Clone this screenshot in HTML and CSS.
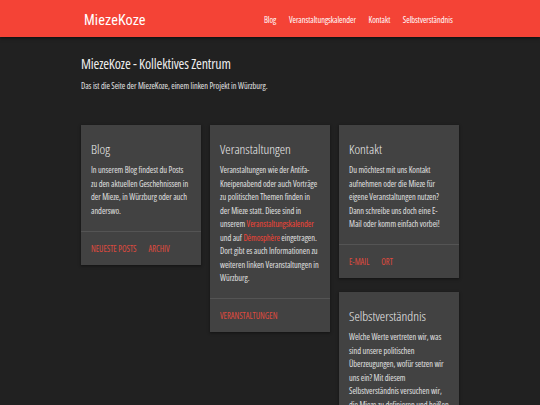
FILE: index.html
```html
<!DOCTYPE html>
<html lang="de">
<head>
<meta charset="utf-8">
<title>MiezeKoze</title>
<link rel="stylesheet" href="styles.css">
</head>
<body>
<nav class="topnav">
  <div class="container nav-inner">
    <a class="brand" href="#">MiezeKoze</a>
    <ul class="nav-links">
      <li><a href="#">Blog</a></li>
      <li><a href="#">Veranstaltungskalender</a></li>
      <li><a href="#">Kontakt</a></li>
      <li><a href="#">Selbstverständnis</a></li>
    </ul>
  </div>
</nav>
<main class="container">
  <h1 class="page-title">MiezeKoze - Kollektives Zentrum</h1>
  <p class="intro">Das ist die Seite der MiezeKoze, einem linken Projekt in Würzburg.</p>
  <div class="cards">
    <div class="col">
      <section class="card">
        <div class="card-content">
          <h2 class="card-title">Blog</h2>
          <p>In unserem Blog findest du Posts zu den aktuellen Geschehnissen in der Mieze, in Würzburg oder auch anderswo.</p>
        </div>
        <div class="card-action"><a href="#">Neueste Posts</a><a href="#">Archiv</a></div>
      </section>
    </div>
    <div class="col">
      <section class="card">
        <div class="card-content">
          <h2 class="card-title">Veranstaltungen</h2>
          <p>Veranstaltungen wie der Antifa-Kneipenabend oder auch Vorträge zu politischen Themen finden in der Mieze statt. Diese sind in unserem <a class="inline" href="#">Veranstaltungskalender</a> und auf <a class="inline" href="#">Démosphère</a> eingetragen. Dort gibt es auch Informationen zu weiteren linken Veranstaltungen in Würzburg.</p>
        </div>
        <div class="card-action"><a href="#">Veranstaltungen</a></div>
      </section>
    </div>
    <div class="col">
      <section class="card">
        <div class="card-content">
          <h2 class="card-title">Kontakt</h2>
          <p>Du möchtest mit uns Kontakt aufnehmen oder die Mieze für eigene Veranstaltungen nutzen? Dann schreibe uns doch eine E-Mail oder komm einfach vorbei!</p>
        </div>
        <div class="card-action"><a href="#">E-Mail</a><a href="#">Ort</a></div>
      </section>
      <section class="card">
        <div class="card-content">
          <h2 class="card-title">Selbstverständnis</h2>
          <p>Welche Werte vertreten wir, was sind unsere politischen Überzeugungen, wofür setzen wir uns ein? Mit diesem Selbstverständnis versuchen wir, die Mieze zu definieren und heißen alle willkommen, die diese Werte mit uns teilen.</p>
        </div>
        <div class="card-action"><a href="#">Selbstverständnis</a></div>
      </section>
    </div>
  </div>
</main>
</body>
</html>
```
FILE: styles.css
```css
html, body {
  margin: 0;
  padding: 0;
}
body {
  background: #212121;
  color: #e4e4e4;
  font-family: "Open Sans", "Roboto Condensed", Roboto, sans-serif;
  font-stretch: 75%;
  font-weight: 380;
  overflow: hidden;
}
a { text-decoration: none; }
.container {
  width: 70%;
  margin: 0 auto;
}

/* nav */
.topnav {
  background: #f44336;
  height: 37px;
  box-shadow: 0 1px 2px rgba(0,0,0,0.35), 0 2px 4px rgba(0,0,0,0.2);
  position: relative;
  z-index: 1;
}
.nav-inner {
  display: flex;
  align-items: center;
  justify-content: space-between;
  height: 100%;
}
.brand {
  color: #fff;
  font-family: "Roboto Condensed", "Open Sans", sans-serif;
  font-stretch: 100%;
  font-weight: 400;
  font-size: 14.2px;
  letter-spacing: 0.1px;
  margin-left: 3px;
  line-height: 37px;
  padding-top: 4.5px;
}
.nav-links {
  list-style: none;
  margin: 0;
  padding: 2px 0 0;
  display: flex;
}
.nav-links a {
  color: #fff;
  font-size: 8.4px;
  letter-spacing: -0.05px;
  padding: 0 6.3px;
  display: block;
}

/* header text */
.page-title {
  font-size: 14px;
  font-weight: 400;
  letter-spacing: -0.15px;
  color: #ececec;
  margin: 0;
  padding-top: 18px;
  line-height: 18px;
}
.intro {
  font-size: 8.4px;
  letter-spacing: -0.05px;
  margin: 0;
  padding-top: 6px;
  line-height: 13px;
}

/* cards */
.cards {
  display: grid;
  grid-template-columns: repeat(3, 1fr);
  column-gap: 9px;
  margin-top: 33px;
  align-items: start;
}
.col {
  display: flex;
  flex-direction: column;
  gap: 14px;
}
.card {
  background: #424242;
  box-shadow: 0 1px 2px rgba(0,0,0,0.3), 0 1px 4px rgba(0,0,0,0.2);
}
.card-content {
  padding: 13.5px 10px;
}
.card-title {
  margin: 0 0 3.6px;
  font-size: 13.5px;
  font-weight: 300;
  line-height: 21px;
  color: #ececec;
}
.card-content p {
  margin: 0;
  font-size: 8.4px;
  line-height: 13.5px;
  letter-spacing: -0.05px;
  color: #e0e0e0;
}
.inline { color: #f44336; }
.card-action {
  border-top: 1px solid rgba(160,160,160,0.2);
  padding: 9px 10px;
  line-height: 15px;
  display: flex;
  gap: 12px;
}
.card-action a {
  color: #e04a3e;
  font-size: 8.4px;
  text-transform: uppercase;
}
```
